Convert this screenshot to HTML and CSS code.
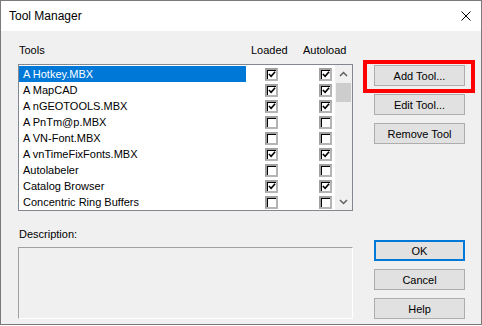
FILE: index.html
```html
<!DOCTYPE html>
<html lang="en">

<head>
    <meta charset="UTF-8">
    <title>Tool Manager</title>
    <link rel="stylesheet" href="styles.css">
</head>

<body>
    <div class="window">
        <div class="titlebar">
            <span class="title">Tool Manager</span>
            <svg class="close" width="10" height="10" viewBox="0 0 10 10">
                <path d="M0.5 0.5 L9.5 9.5 M9.5 0.5 L0.5 9.5" stroke="#000" stroke-width="1" fill="none" />
            </svg>
        </div>

        <div class="content">
            <div class="left">
                <div class="header">
                    <span class="h-tools">Tools</span>
                    <span class="h-loaded">Loaded</span>
                    <span class="h-auto">Autoload</span>
                </div>

                <div class="listbox">
                    <div class="rows" id="rows"></div>
                    <div class="scrollbar">
                        <div class="sb-btn">
                            <svg width="9" height="6" viewBox="0 0 9 6">
                                <path d="M1 5 L4.5 1.5 L8 5" stroke="#606060" stroke-width="1.5" fill="none" />
                            </svg>
                        </div>
                        <div class="sb-thumb"></div>
                        <div class="sb-track"></div>
                        <div class="sb-btn">
                            <svg width="9" height="6" viewBox="0 0 9 6">
                                <path d="M1 1 L4.5 4.5 L8 1" stroke="#606060" stroke-width="1.5" fill="none" />
                            </svg>
                        </div>
                    </div>
                </div>

                <div class="desc-label">Description:</div>
                <div class="desc-box"></div>
            </div>

            <div class="right">
                <div class="btn-group">
                    <div class="highlight-wrap">
                        <button class="btn">Add Tool...</button>
                        <div class="highlight"></div>
                    </div>
                    <button class="btn">Edit Tool...</button>
                    <button class="btn">Remove Tool</button>
                </div>
                <div class="btn-group bottom">
                    <button class="btn default">OK</button>
                    <button class="btn">Cancel</button>
                    <button class="btn">Help</button>
                </div>
            </div>
        </div>
    </div>

    <script>
        const tools = [
            ['A Hotkey.MBX', true, true],
            ['A MapCAD', true, true],
            ['A nGEOTOOLS.MBX', true, true],
            ['A PnTm@p.MBX', false, false],
            ['A VN-Font.MBX', false, false],
            ['A vnTimeFixFonts.MBX', true, true],
            ['Autolabeler', false, false],
            ['Catalog Browser', true, true],
            ['Concentric Ring Buffers', false, false]
        ];

        const tick = '<svg width="9" height="9" viewBox="0 0 9 9"><path d="M1 4 L3.5 6.5 L8 1.5" stroke="#000" stroke-width="1.8" fill="none"/></svg>';

        function box(checked) {
            return '<span class="check">' + (checked ? tick : '') + '</span>';
        }

        const rows = document.getElementById('rows');
        tools.forEach((t, i) => {
            const row = document.createElement('div');
            row.className = 'row';
            row.innerHTML =
                '<span class="name' + (i === 0 ? ' selected' : '') + '">' + t[0] + '</span>' +
                '<span class="cell-loaded">' + box(t[1]) + '</span>' +
                '<span class="cell-auto">' + box(t[2]) + '</span>';
            rows.appendChild(row);
        });
    </script>
</body>

</html>
```

FILE: styles.css
```css
body {
    margin: 0;
    background: #fff;
    font-family: "Liberation Sans", Arial, sans-serif;
    font-size: 11px;
    color: #000;
}

.window {
    width: 482px;
    height: 325px;
    box-sizing: border-box;
    border: 1px solid #7a7a7a;
    background: #f0f0f0;
    display: flex;
    flex-direction: column;
}

.titlebar {
    height: 30px;
    background: #fff;
    display: flex;
    align-items: center;
    justify-content: space-between;
    padding: 0 10px 0 8px;
}

.title {
    font-size: 12px;
}

.content {
    flex: 1;
    display: flex;
    padding: 13px 15px 5px 17px;
}

.left {
    width: 335px;
    display: flex;
    flex-direction: column;
}

.header {
    height: 13px;
    line-height: 13px;
    display: flex;
    white-space: nowrap;
}

.h-tools {
    width: 232px;
    margin-left: 1px;
}

.h-loaded {
    width: 52px;
}

.listbox {
    margin-top: 7px;
    height: 147px;
    box-sizing: border-box;
    border: 1px solid #828790;
    background: #fff;
    display: flex;
}

.rows {
    flex: 1;
    padding-top: 1px;
}

.row {
    height: 16px;
    display: flex;
    align-items: center;
}

.name {
    width: 223px;
    height: 16px;
    line-height: 16px;
    padding-left: 4px;
    white-space: nowrap;
}

.name.selected {
    background: #0078d7;
    color: #fff;
}

.cell-loaded {
    margin-left: 19px;
    display: flex;
}

.cell-auto {
    margin-left: 41px;
    display: flex;
}

.check {
    width: 13px;
    height: 13px;
    box-sizing: border-box;
    border: 2px solid #b4b4b4;
    border-top-color: #a0a0a0;
    border-left-color: #a0a0a0;
    box-shadow: inset 1px 1px 0 #000;
    background: #fff;
    display: flex;
    align-items: center;
    justify-content: center;
}

.check svg {
    margin: 1px 0 0 1px;
}

.scrollbar {
    width: 17px;
    background: #f0f0f0;
    display: flex;
    flex-direction: column;
}

.sb-btn {
    height: 17px;
    display: flex;
    align-items: center;
    justify-content: center;
}

.sb-thumb {
    height: 19px;
    margin: 1px 1px 0 1px;
    background: #cdcdcd;
}

.sb-track {
    flex: 1;
}

.desc-label {
    margin-top: 17px;
    height: 13px;
    line-height: 13px;
    margin-left: 1px;
}

.desc-box {
    margin-top: 6px;
    height: 72px;
    box-sizing: border-box;
    border: 1px solid #a0a0a0;
    border-right-color: #fff;
    border-bottom-color: #fff;
}

.right {
    width: 91px;
    margin-left: 21px;
    padding-top: 21px;
    display: flex;
    flex-direction: column;
    justify-content: space-between;
}

.btn-group {
    display: flex;
    flex-direction: column;
    gap: 8px;
}

.btn {
    display: block;
    width: 91px;
    height: 21px;
    box-sizing: border-box;
    border: 1px solid #adadad;
    background: #e1e1e1;
    font-family: "Liberation Sans", Arial, sans-serif;
    font-size: 11px;
    color: #000;
    padding: 0;
}

.btn.default {
    border: 2px solid #0078d7;
}

.highlight-wrap {
    position: relative;
}

.highlight {
    position: absolute;
    left: -11px;
    top: -5px;
    width: 112px;
    height: 33px;
    box-sizing: border-box;
    border: 4px solid #ff0000;
}
```
